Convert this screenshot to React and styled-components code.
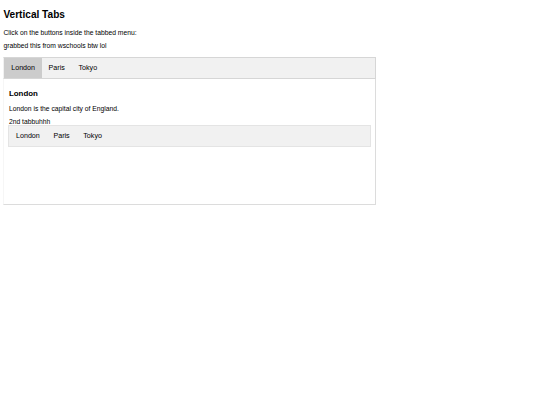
import React, { useState } from 'react';
import styled, { createGlobalStyle } from 'styled-components';

const cities = [
   { name: 'London', text: 'London is the capital city of England.' },
   { name: 'Paris', text: 'Paris is the capital of France.' },
   { name: 'Tokyo', text: 'Tokyo is the capital of Japan.' },
];

const GlobalStyle = createGlobalStyle`
   body {
      margin: 3.4px;
      font-family: "Liberation Sans", Arial, sans-serif;
      color: #000;
      background: #fff;
   }
`;

const Title = styled.h2`
   font-size: 10.1px;
   font-weight: bold;
   margin: 5.2px 0 9.6px;
`;

const Text = styled.p`
   font-size: 6.75px;
   margin: 6px 0;
`;

const Wrapper = styled.div`
   width: 373px;
   margin-top: 8px;
`;

const TabBar = styled.div`
   overflow: hidden;
   display: flex;
   background: #f1f1f1;
   border: 1px solid #d6d6d6;
   border-left-color: #f1f1f1;
`;

const TabButton = styled.button`
   background: ${(p) => (p.$active ? '#ccc' : 'inherit')};
   border: none;
   outline: none;
   cursor: pointer;
   padding: 5.9px 6.8px;
   font-family: inherit;
   font-size: 7.15px;
   line-height: 8.2px;
   color: #000;
   &:hover {
      background: #ddd;
   }
`;

const TabContent = styled.div`
   height: 120px;
   padding: 2.5px 4.4px 2.5px 3.8px;
   border: 1px solid #dcdcdc;
   border-left-color: #f6f6f6;
   border-top: none;

   h3 {
      font-size: 7.9px;
      margin: 7.2px 0 7.2px;
      padding-left: 0.8px;
   }

   p {
      padding-left: 0.8px;
   }
`;

const Note = styled.div`
   font-size: 6.75px;
   margin-top: -0.5px;
   padding-left: 0.8px;
`;

const NestedBar = styled(TabBar)`
   border-color: #e4e4e4;
   margin-top: 0.5px;
`;

export default function App() {
   const [active, setActive] = useState('London');
   const [inner, setInner] = useState(null);
   const city = cities.find((c) => c.name === active);

   return (
      <>
         <GlobalStyle />
         <Title>Vertical Tabs</Title>
         <Text>Click on the buttons inside the tabbed menu:</Text>
         <Text>grabbed this from wschools btw lol</Text>
         <Wrapper>
            <TabBar>
               {cities.map((c) => (
                  <TabButton
                     key={c.name}
                     $active={c.name === active}
                     onClick={() => setActive(c.name)}
                  >
                     {c.name}
                  </TabButton>
               ))}
            </TabBar>
            <TabContent>
               <h3>{city.name}</h3>
               <Text>{city.text}</Text>
               <Note>2nd tabbuhhh</Note>
               <NestedBar>
                  {cities.map((c) => (
                     <TabButton
                        key={c.name}
                        $active={c.name === inner}
                        onClick={() => setInner(c.name)}
                     >
                        {c.name}
                     </TabButton>
                  ))}
               </NestedBar>
            </TabContent>
         </Wrapper>
      </>
   );
}
